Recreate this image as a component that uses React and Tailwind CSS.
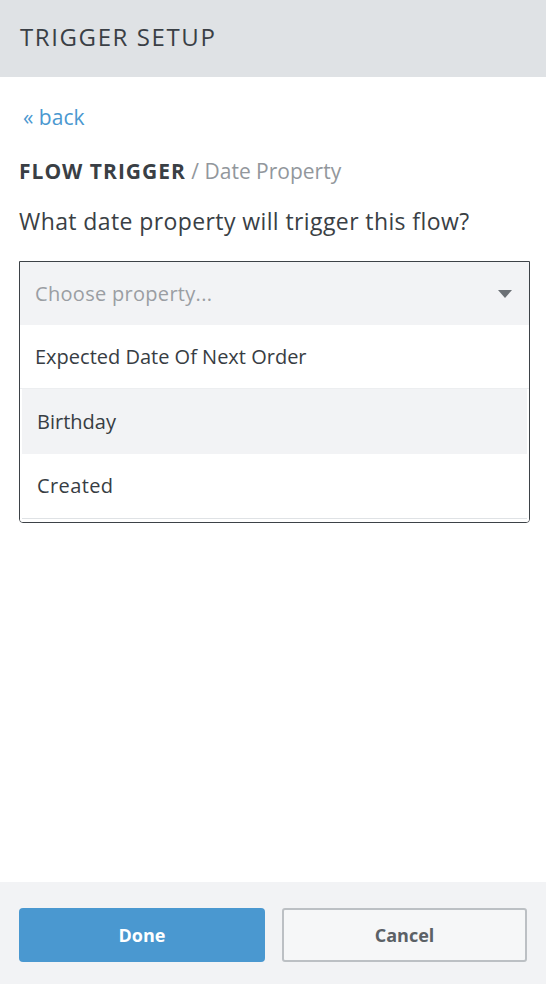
import React from "react";

export default function App() {
  const font = { fontFamily: "'Open Sans', 'Noto Sans', sans-serif" };
  return (
    <div className="w-[546px] h-[984px] flex flex-col bg-white text-[#373d43]" style={font}>
      <div className="h-[77px] bg-[#dfe2e5] flex items-center px-5 pb-[3px]">
        <h1 className="text-[24px] tracking-[1.6px] text-[#3a3f45]">TRIGGER SETUP</h1>
      </div>
      <div className="flex-1 px-[19px] pt-[27px]">
        <a className="block text-[21px] leading-[26px] text-[#4a98d0] ml-[4px]">« back</a>
        <div className="mt-[28px] text-[21px] leading-[26px]">
          <span className="font-bold tracking-[1px] text-[#3a3f45]">FLOW TRIGGER</span>
          <span className="text-[#92979c]"> / Date Property</span>
        </div>
        <div className="mt-[23px] text-[23px] tracking-[0.4px] leading-[28px] text-[#3a3f45]">What date property will trigger this flow?</div>
        <div className="mt-[26px] w-[511px] border border-[#3d4247] rounded-b-[4px] overflow-hidden">
          <div className="h-[63px] bg-[#f2f3f5] flex items-center justify-between pl-[15px] pr-[17px]">
            <span className="text-[20px] tracking-[0.3px] text-[#9a9ea3]">Choose property...</span>
            <svg width="14" height="8" viewBox="0 0 14 8"><path d="M0 0 L14 0 L7 8 Z" fill="#6b7075" /></svg>
          </div>
          <div className="bg-white">
            <div className="h-[64px] flex items-center pl-[15px] text-[20px] border-b border-[#eceef0]">Expected Date Of Next Order</div>
            <div className="mx-[2px] h-[65px] flex items-center pl-[15px] text-[20px] bg-[#f2f3f5]">Birthday</div>
            <div className="mx-[2px] h-[65px] flex items-center pl-[15px] text-[20px] tracking-[0.4px] border-b border-[#dfe2e5]">Created</div>
            <div className="h-[3px]" />
          </div>
        </div>
      </div>
      <div className="h-[102px] bg-[#f2f3f5] flex gap-[17px] px-[19px] pt-[26px]">
        <button className="w-[246px] h-[54px] rounded-[4px] bg-[#4a98d0] text-white font-bold text-[18px]">Done</button>
        <button className="w-[245px] h-[54px] rounded-[3px] border-2 border-[#bcc0c4] bg-[#f6f7f8] text-[#5b6166] font-bold text-[18px]">Cancel</button>
      </div>
    </div>
  );
}
